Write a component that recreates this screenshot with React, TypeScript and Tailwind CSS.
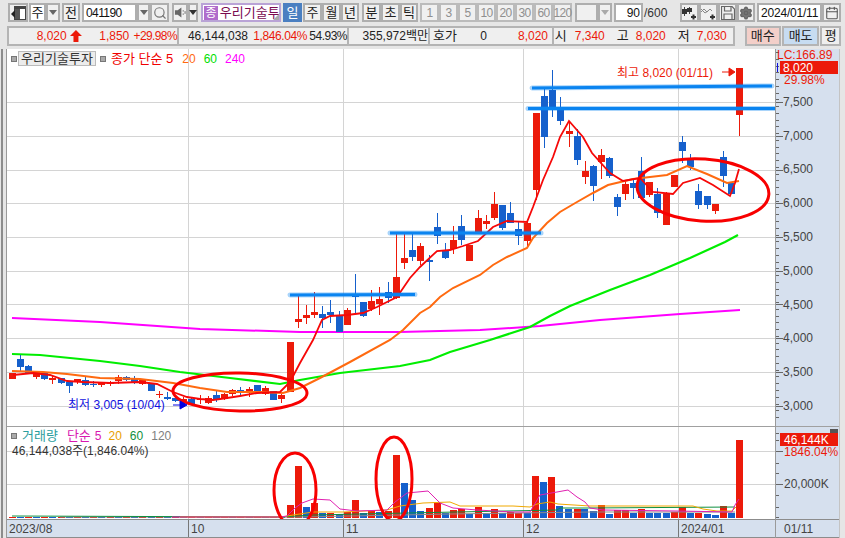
import React from 'react';
import { Search, Settings, Calendar } from 'lucide-react';

const FONT = "font-['Liberation_Sans','Noto_Sans_CJK_KR',sans-serif]";
const RED = '#ec1a0a';
const BLUE = '#1560cc';

// x, body top, body bottom, wick top, wick bottom, r = red / b = blue (page coordinates)
type Candle = [number, number, number, number, number, 'r' | 'b'];
const candles: Candle[] = [
  [12, 373, 379, 373, 379, 'r'], [20, 359, 367, 355, 371, 'b'], [28, 366, 373, 365, 374, 'b'], [36, 372, 377, 372, 379, 'r'],
  [44, 373, 379, 372, 380, 'b'], [52, 378, 380, 376, 384, 'r'], [61, 378, 383, 378, 384, 'b'], [69, 382, 386, 381, 393, 'b'],
  [77, 379, 381, 379, 384, 'r'], [85, 380, 385, 377, 386, 'b'], [93, 384, 385, 381, 387, 'b'], [101, 383, 385, 382, 387, 'r'],
  [110, 383, 384, 381, 386, 'r'], [118, 377, 381, 375, 384, 'r'], [126, 377, 380, 376, 381, 'b'], [134, 378, 383, 376, 384, 'b'],
  [142, 380, 384, 379, 385, 'r'], [151, 384, 391, 384, 391, 'b'], [159, 394, 395, 391, 398, 'r'], [167, 397, 399, 392, 400, 'b'],
  [175, 398, 401, 396, 402, 'b'], [183, 399, 401, 397, 407, 'r'], [191, 399, 404, 398, 405, 'b'], [200, 399, 400, 395, 404, 'r'],
  [208, 398, 403, 396, 404, 'r'], [216, 395, 400, 390, 402, 'b'], [224, 394, 399, 393, 400, 'r'], [232, 390, 394, 389, 396, 'r'],
  [240, 390, 393, 387, 395, 'b'], [249, 389, 393, 387, 397, 'r'], [257, 385, 393, 385, 393, 'b'], [265, 388, 394, 386, 395, 'r'],
  [273, 391, 400, 391, 400, 'b'], [281, 395, 399, 394, 403, 'r'], [290, 342, 392, 342, 392, 'r'],
  [298, 319, 322, 295, 328, 'r'], [306, 315, 318, 305, 324, 'r'], [314, 312, 315, 292, 318, 'r'], [322, 314, 318, 306, 328, 'b'],
  [330, 312, 315, 300, 323, 'b'], [339, 316, 332, 311, 332, 'b'], [347, 310, 325, 308, 325, 'r'], [355, 294, 297, 274, 313, 'b'],
  [363, 302, 316, 302, 317, 'b'], [371, 301, 309, 290, 311, 'r'], [379, 299, 304, 287, 315, 'r'], [388, 292, 298, 282, 303, 'b'],
  [396, 277, 298, 233, 299, 'r'], [404, 258, 263, 233, 269, 'r'], [412, 250, 257, 233, 261, 'b'], [420, 246, 261, 243, 265, 'r'],
  [429, 260, 262, 255, 281, 'b'], [437, 227, 236, 213, 244, 'b'], [445, 251, 258, 243, 259, 'b'], [453, 240, 249, 226, 254, 'r'],
  [461, 226, 240, 215, 245, 'b'], [469, 245, 261, 245, 261, 'r'], [478, 218, 232, 210, 233, 'r'], [486, 221, 224, 215, 229, 'r'],
  [494, 204, 218, 192, 220, 'r'], [502, 205, 228, 205, 230, 'b'], [510, 213, 223, 202, 223, 'b'], [518, 229, 236, 222, 245, 'b'],
  [527, 223, 241, 222, 248, 'r'], [536, 113, 190, 113, 200, 'r'], [544, 96, 137, 88, 148, 'b'], [552, 90, 107, 70, 117, 'b'],
  [560, 108, 121, 97, 125, 'b'], [569, 131, 134, 121, 147, 'r'], [577, 136, 160, 129, 165, 'b'], [585, 171, 177, 161, 184, 'r'],
  [593, 166, 186, 165, 201, 'b'], [601, 155, 162, 149, 179, 'r'], [609, 158, 176, 157, 178, 'b'], [617, 197, 207, 194, 216, 'b'],
  [625, 184, 194, 180, 200, 'r'], [633, 183, 188, 180, 199, 'b'], [641, 171, 198, 157, 198, 'b'], [649, 182, 195, 182, 197, 'r'],
  [657, 194, 213, 188, 218, 'b'], [666, 194, 225, 192, 225, 'r'], [674, 175, 187, 175, 187, 'r'], [682, 142, 151, 136, 163, 'b'],
  [690, 160, 167, 154, 170, 'b'], [698, 191, 205, 184, 209, 'b'], [707, 196, 205, 196, 209, 'b'], [715, 204, 211, 204, 214, 'r'],
  [723, 157, 176, 151, 187, 'b'], [731, 183, 194, 182, 194, 'b'], [739, 68, 115, 68, 136, 'r'],
];

const ma5 = '13,375 33,373 50,375 67,381 83,382 110,383 140,382 157,384 173,392 187,397 200,399 213,400 227,398 240,396 257,393 280,392 290,382 300,363 313,340 322,320 330,316 347,315 363,313 377,307 397,297 410,278 420,267 437,251 450,250 463,246 478,241 493,227 507,221 527,222 533,207 543,180 553,157 560,137 569,121 583,137 592,153 610,173 623,181 640,178 653,192 673,194 683,183 700,178 713,185 730,196 735,183 739,169';
const ma20 = '12,371 43,372 67,374 100,378 140,379 173,383 200,388 227,392 260,392 283,393 300,388 320,378 350,362 390,340 403,330 420,313 430,307 440,297 453,288 480,275 493,265 507,257 527,248 533,238 547,223 560,212 577,202 593,193 608,185 633,179 667,175 687,166 707,174 727,183 739,181';
const ma60 = '12,354 40,355 100,361 140,366 180,372 230,378 280,384 300,380 340,373 400,366 430,360 450,352 490,340 530,327 550,316 570,306 610,290 650,275 690,258 725,242 738,235';
const ma240 = '12,318 100,322 200,329 300,332 340,332 400,332 480,330 540,326 600,320 680,314 740,310';

const volumes: [number, number, 'r' | 'b'][] = [
  [290, 505, 'r'], [298, 466, 'r'], [306, 507, 'b'], [314, 503, 'r'], [322, 513, 'b'], [330, 513, 'r'], [339, 514, 'b'], [347, 512, 'r'],
  [355, 500, 'r'], [363, 513, 'b'], [371, 511, 'r'], [379, 512, 'b'], [388, 511, 'r'], [396, 455, 'r'], [404, 483, 'b'], [412, 500, 'b'],
  [420, 511, 'b'], [429, 508, 'r'], [437, 503, 'r'], [445, 513, 'b'], [453, 510, 'r'], [461, 509, 'r'], [469, 514, 'b'], [478, 507, 'r'],
  [486, 514, 'b'], [494, 509, 'r'], [502, 513, 'b'], [510, 512, 'r'], [518, 513, 'r'], [527, 513, 'b'], [535, 476, 'r'], [543, 482, 'b'],
  [551, 477, 'r'], [559, 506, 'b'], [568, 509, 'b'], [577, 509, 'r'], [584, 509, 'b'], [593, 511, 'b'], [601, 505, 'r'], [609, 514, 'b'],
  [617, 510, 'r'], [625, 510, 'r'], [633, 513, 'b'], [641, 509, 'r'], [649, 513, 'b'], [657, 513, 'b'], [666, 513, 'b'], [674, 512, 'r'],
  [682, 507, 'r'], [690, 513, 'b'], [698, 513, 'r'], [707, 514, 'b'], [715, 515, 'b'], [723, 506, 'r'], [731, 513, 'b'], [739, 440, 'r'],
];
const smallBars = [12, 20, 28, 36, 44, 52, 61, 69, 77, 85, 93, 101, 110, 118, 126, 134, 142, 151, 159, 167, 175, 183, 191, 200, 208, 216, 224, 232, 240, 249, 257, 265, 273, 281];

const volMa5 = '172,517 280,517 287,516 295,508 302,503 313,499 330,500 340,509 357,511 387,510 395,502 407,493 428,491 440,503 453,508 477,510 513,512 530,512 540,495 557,492 568,490 577,497 585,502 590,508 603,510 677,511 732,512 735,505 739,499';
const volMa20 = '180,517 282,517 293,515 313,512 343,512 387,510 400,506 423,503 450,502 460,506 513,506 530,507 537,504 550,502 558,504 590,506 677,506 693,506 703,509 717,511 732,511 736,507';
const volMa60 = '12,516 280,517 313,515 407,513 557,510 560,508 587,508 735,507';
const volMa120 = '60,517 300,517 450,514 590,512 735,512';

const priceLabels = ['7,500', '7,000', '6,500', '6,000', '5,500', '5,000', '4,500', '4,000', '3,500', '3,000'];
const priceGrid = [102, 136, 170, 203, 237, 271, 304, 338, 372, 406];
const gridX = [188, 343, 523, 678];

const btn = 'h-[19px] flex items-center justify-center border-2 border-[#aeaeae] bg-[#f0f0f0] text-[13px]';
const field = 'h-[19px] flex items-center border-2 border-[#aeaeae] bg-white text-[#111]';

function Arrow({ color = '#666' }: { color?: string }) {
  return <span className="w-0 h-0 border-x-[4px] border-x-transparent border-t-[5px]" style={{ borderTopColor: color }} />;
}

function Toolbar() {
  return (
    <div className="flex items-start h-[26px] pt-[3px] pl-[8px] text-[#222]">
      <div className={`${btn} w-[20px] mr-[1px]`}>
        <svg width="15" height="14" viewBox="0 0 15 14">
          <rect x="3.5" y="0.5" width="11" height="13" fill="#fff" stroke="#444" />
          <rect x="4" y="1" width="10" height="2" fill="#444" />
          <rect x="4" y="3" width="5" height="10" fill="#555" />
          <path d="M0 8 L4 4 V12 Z" fill="#222" />
        </svg>
      </div>
      <div className={`${field} w-[17px] justify-center text-[13px]`}>주</div>
      <div className={`${btn} w-[14px] mr-[2px] bg-[#dcdcdc]`}><Arrow /></div>
      <div className={`${btn} w-[18px] mr-[2px]`}>전</div>
      <div className={`${field} w-[55px] pl-[2px] text-[12px] tracking-[-0.6px]`}>041190</div>
      <div className={`${btn} w-[13px]`}><Arrow /></div>
      <div className={`${btn} w-[19px] mr-[3px]`}><Search size={14} strokeWidth={2} color="#777" /></div>
      <div className={`${btn} w-[16px]`}>
        <svg width="13" height="13" viewBox="0 0 13 13">
          <path d="M1 4H4L8 1V12L4 9H1Z" fill="#666" />
          <path d="M10 4V5.5M10 7.5V9M12 5V8" stroke="#666" />
        </svg>
      </div>
      <div className={`${btn} w-[10px] mr-[3px]`}><Arrow color="#333" /></div>
      <div className="h-[19px] w-[80px] mr-[2px] flex items-center pl-[1px] gap-[2px] border-2 border-[#b9a3d6] bg-white relative">
        <span className="w-[14px] h-[14px] flex items-center justify-center bg-[#b06ccc] text-white text-[12px]">종</span>
        <span className="text-[13px] text-[#7a0a50] whitespace-nowrap overflow-hidden w-[60px]">우리기술투</span>
        <span className="absolute right-0 bottom-0 w-0 h-0 border-l-[6px] border-l-transparent border-b-[6px] border-b-[#aaa]" />
      </div>
      <div className="h-[19px] w-[19px] mr-[1px] flex items-center justify-center bg-[#4a7fc1] text-white text-[13px]">일</div>
      <div className={`${btn} w-[19px]`}>주</div>
      <div className={`${btn} w-[19px]`}>월</div>
      <div className={`${btn} w-[18px] mr-[3px]`}>년</div>
      <div className={`${btn} w-[19px]`}>분</div>
      <div className={`${btn} w-[19px]`}>초</div>
      <div className={`${btn} w-[18px] mr-[2px]`}>틱</div>
      {['1', '3', '5', '10', '20', '30', '60', '120'].map((t) => (
        <div key={t} className="h-[19px] w-[19px] flex items-center justify-center border-2 border-[#bbbbbb] bg-[#f0f0f0] text-[12px] tracking-[-0.7px] text-[#8f8f8f]">{t}</div>
      ))}
      <div className={`${btn} w-[23px] ml-[3px] bg-[#ececec]`} />
      <div className={`${btn} w-[14px] mr-[2px] bg-[#ececec]`}><Arrow color="#aaa" /></div>
      <div className={`${field} w-[29px] justify-end pr-[1px] text-[12px]`}>90</div>
      <div className="h-[19px] w-[37px] flex items-center pl-[1px] text-[12px] text-[#333]">/600</div>
      <div className={`${btn} w-[19px]`}>
        <svg width="15" height="14" viewBox="0 0 15 14">
          <path d="M2.5 1V10M7.5 1V8" stroke="#444" />
          <rect x="0" y="3" width="5" height="5" fill="#333" />
          <rect x="5" y="2" width="5" height="4" fill="#333" />
          <path d="M9 11H14M11.5 8.5V13.5" stroke="#333" strokeWidth="2" />
        </svg>
      </div>
      <div className={`${btn} w-[19px]`}>
        <svg width="15" height="14" viewBox="0 0 15 14">
          <path d="M0 6L3 3L6 6L9 3L11 5M0 3L4 7L7 5" stroke="#888" fill="none" />
          <path d="M9 11H14M11.5 8.5V13.5" stroke="#333" strokeWidth="2" />
        </svg>
      </div>
      <div className={`${btn} w-[19px]`}>
        <svg width="14" height="14" viewBox="0 0 14 14" fill="none" stroke="#666">
          <path d="M0.5 0.5H11L13.5 3V13.5H0.5Z" strokeWidth="1.2" />
          <path d="M3.5 0.5V5H10V0.5M3 13.5V8H11V13.5" strokeWidth="1.2" />
        </svg>
      </div>
      <div className={`${btn} w-[18px] mr-[2px]`}><Settings size={14} color="#666" fill="#777" strokeWidth={2.4} /></div>
      <div className={`${field} w-[65px] pl-[2px] text-[12px] tracking-[-0.2px]`}>2024/01/11</div>
      <div className={`${btn} w-[19px]`}><Calendar size={14} color="#555" strokeWidth={1.8} /></div>
    </div>
  );
}

function QuoteRow() {
  const red = 'text-[#ec1a0a]';
  return (
    <div className="flex h-[20px] ml-[7px] mr-[4px] text-[12px] text-[#222] whitespace-nowrap">
      <div className="w-[172px] flex items-center border-2 border-[#b4b4b4] bg-[#efefef]">
        <span className={`w-[58px] text-right ${red}`}>8,020</span>
        <svg width="14" height="14" viewBox="0 0 14 14" className="ml-[2px]"><path d="M7 1L13 7H9.5V13H4.5V7H1Z" fill={RED} /></svg>
        <span className={`w-[47px] text-right ${red}`}>1,850</span>
        <span className={`w-[48px] text-right tracking-[-0.6px] ${red}`}>+29.98%</span>
      </div>
      <div className="w-[171px] flex items-center border-y-2 border-r-2 border-[#b4b4b4] bg-[#efefef]">
        <span className="w-[69px] text-right">46,144,038</span>
        <span className={`w-[59px] text-right tracking-[-0.4px] ${red}`}>1,846.04%</span>
        <span className="w-[40px] text-right tracking-[-0.5px]">54.93%</span>
      </div>
      <div className="w-[82px] flex items-center border-y-2 border-r-2 border-[#b4b4b4] bg-[#efefef]">
        <span className="w-[79px] text-right">355,972백만</span>
      </div>
      <div className="w-[126px] flex items-center border-y-2 border-r-2 border-[#b4b4b4] bg-[#efefef]">
        <span className="w-[30px] pl-[3px] text-[13px]">호가</span>
        <span className="w-[27px] text-right">0</span>
        <span className={`w-[61px] text-right ${red}`}>8,020</span>
      </div>
      <div className="w-[184px] flex items-center border-y-2 border-r-2 border-[#b4b4b4] bg-[#efefef]">
        <span className="w-[13px] text-right text-[13px]">시</span>
        <span className={`w-[38px] text-right ${red}`}>7,340</span>
        <span className="w-[24px] text-right text-[13px]">고</span>
        <span className={`w-[37px] text-right ${red}`}>8,020</span>
        <span className="w-[24px] text-right text-[13px]">저</span>
        <span className={`w-[37px] text-right ${red}`}>7,030</span>
      </div>
      <div className="w-[37px] ml-[10px] flex items-center justify-center border-2 border-[#b4b4b4] bg-[#f3cfc9] text-[13px]">매수</div>
      <div className="w-[38px] ml-[1px] flex items-center justify-center border-2 border-[#b4b4b4] bg-[#c7dcf1] text-[13px]">매도</div>
      <div className="w-[21px] ml-[1px] flex items-center justify-center border-2 border-[#b4b4b4] bg-[#efefef] text-[13px]">평</div>
    </div>
  );
}

function PriceChart() {
  return (
    <svg viewBox="7 49 768 377" width="768" height="377" className="block">
      {priceGrid.map((y) => <line key={y} x1="7" x2="775" y1={y + 0.5} y2={y + 0.5} stroke="#d4d4d4" />)}
      {gridX.map((x) => <line key={x} x1={x + 0.5} x2={x + 0.5} y1="49" y2="426" stroke="#d4d4d4" />)}
      <polyline points={ma240} fill="none" stroke="#ff00ff" strokeWidth="2" />
      <polyline points={ma60} fill="none" stroke="#00ee00" strokeWidth="2.2" />
      {candles.map(([x, t, b, wt, wb, c]) => (
        <g key={x} shapeRendering="crispEdges" fill={c === 'r' ? RED : BLUE}>
          <rect x={x} y={wt} width="1" height={wb - wt} />
          <rect x={x - 3} y={t} width="7" height={Math.max(b - t, 1)} />
        </g>
      ))}
      <polyline points={ma20} fill="none" stroke="#ff6a10" strokeWidth="2" />
      <polyline points={ma5} fill="none" stroke="#f60808" strokeWidth="1.8" />
      <g stroke="#0a84f0" fill="none">
        <line x1="290" y1="295" x2="415" y2="294.5" strokeWidth="5" strokeOpacity="0.35" strokeLinecap="round" />
        <line x1="290" y1="295" x2="415" y2="294.5" strokeWidth="3" />
        <line x1="390" y1="233" x2="541" y2="233" strokeWidth="5" strokeOpacity="0.35" strokeLinecap="round" />
        <line x1="390" y1="233" x2="541" y2="233" strokeWidth="3" />
        <line x1="532" y1="88" x2="772" y2="86" strokeWidth="5" strokeOpacity="0.35" strokeLinecap="round" />
        <line x1="532" y1="88" x2="772" y2="86" strokeWidth="3" />
        <line x1="528" y1="108.5" x2="775" y2="108.5" strokeWidth="5" strokeOpacity="0.35" strokeLinecap="round" />
        <line x1="528" y1="108.5" x2="775" y2="108.5" strokeWidth="3" />
      </g>
      <g fill="none" stroke="#f80000" strokeWidth="3">
        <ellipse cx="240" cy="392" rx="67" ry="19" transform="rotate(1 240 392)" />
        <ellipse cx="703" cy="190" rx="66" ry="31" transform="rotate(4 703 190)" />
      </g>
      <path d="M722 72H730M729 68L735 72L729 76Z" stroke={RED} fill={RED} />
      <path d="M173 405H181M180 401L187 405L180 409Z" stroke="#0000e0" fill="#0000e0" />
    </svg>
  );
}

function VolumeChart() {
  return (
    <svg viewBox="7 427 768 92" width="768" height="92" className="block">
      {[451, 484].map((y) => <line key={y} x1="7" x2="775" y1={y + 0.5} y2={y + 0.5} stroke="#d4d4d4" />)}
      {gridX.map((x) => <line key={x} x1={x + 0.5} x2={x + 0.5} y1="427" y2="519" stroke="#d4d4d4" />)}
      <g shapeRendering="crispEdges">
        {smallBars.map((x, i) => <rect key={x} x={x - 3} y="516.5" width="7" height="1.5" fill={i % 2 ? BLUE : RED} />)}
        {volumes.map(([x, top, c]) => <rect key={x} x={x - 3} y={top} width="7" height={518 - top} fill={c === 'r' ? RED : BLUE} />)}
      </g>
      <polyline points={volMa120} fill="none" stroke="#8a8a8a" strokeWidth="1" />
      <polyline points={volMa60} fill="none" stroke="#0f9040" strokeWidth="1" />
      <polyline points={volMa20} fill="none" stroke="#f0a800" strokeWidth="1" />
      <polyline points={volMa5} fill="none" stroke="#e020b0" strokeWidth="1" />
      <g fill="none" stroke="#f80000" strokeWidth="3">
        <ellipse cx="295" cy="490" rx="21" ry="37" />
        <ellipse cx="394" cy="479" rx="18" ry="42" />
      </g>
    </svg>
  );
}

function Ticks({ ys, major }: { ys: number[]; major: number[] }) {
  return (
    <svg className="absolute left-0 top-0" width="8" height="100%">
      {ys.map((y) => <line key={y} x1="0" x2={major.includes(y) ? 7 : 3} y1={y + 0.5} y2={y + 0.5} stroke="#666" />)}
    </svg>
  );
}

export default function App() {
  const majorTicks = priceGrid.map((y) => y - 49);
  const priceTicks = Array.from({ length: 55 }, (_, i) => Math.round(3 + i * 6.76));
  return (
    <div className={`w-[845px] h-[538px] overflow-hidden flex flex-col bg-[#e6e6e6] ${FONT}`}>
      <Toolbar />
      <QuoteRow />
      <div className="flex h-[489px] mt-[3px] ml-[1px] pl-[3px] border-l-2 border-[#8c8c8c]">
        <div className="w-[770px] flex flex-col bg-white border-x border-[#9a9a9a]">
          <div className="relative h-[378px] border-b border-[#a0a0a0]">
            <PriceChart />
            <div className="absolute left-[4px] top-[2px] flex items-center h-[15px] text-[13px] whitespace-nowrap">
              <span className="w-[6px] h-[6px] bg-[#aaa] border border-[#777]" />
              <span className="ml-[1px] w-[78px] h-[15px] flex items-center justify-center border border-[#bbb] bg-[#ececec] text-[#333]">우리기술투자</span>
              <span className="ml-[4px] w-[6px] h-[6px] bg-[#aaa] border border-[#777]" />
              <span className="ml-[5px] text-[#f00000]">종가 단순 5</span>
              <span className="ml-[9px] text-[12px] text-[#ff6a10]">20</span>
              <span className="ml-[8px] text-[12px] text-[#00e000]">60</span>
              <span className="ml-[8px] text-[12px] text-[#ff00ff]">240</span>
            </div>
            <span className="absolute left-[610px] top-[15px] text-[12px] text-[#ec1a0a] whitespace-nowrap">최고 8,020 (01/11)</span>
            <span className="absolute left-[61px] top-[347px] text-[12px] text-[#1010e0] whitespace-nowrap">최저 3,005 (10/04)</span>
          </div>
          <div className="relative h-[92px]">
            <VolumeChart />
            <div className="absolute left-[4px] top-[1px] flex items-center h-[15px] text-[12px] whitespace-nowrap">
              <span className="w-[6px] h-[6px] bg-[#aaa] border border-[#777]" />
              <span className="ml-[5px] text-[13px] text-[#2a9d9d]">거래량</span>
              <span className="ml-[9px] text-[13px] text-[#d818b0]">단순</span>
              <span className="ml-[4px] text-[#d818b0]">5</span>
              <span className="ml-[7px] text-[#e8a000]">20</span>
              <span className="ml-[8px] text-[#109040]">60</span>
              <span className="ml-[8px] text-[#808080]">120</span>
            </div>
            <span className="absolute left-[5px] top-[15px] text-[12px] text-[#333] whitespace-nowrap">46,144,038주(1,846.04%)</span>
          </div>
          <div className="h-[19px] flex items-center bg-[#d6e0ee] border-y border-[#8c8c8c] text-[12px] text-[#444]">
            <span className="w-[181px] pl-[2px]">2023/08</span>
            <span className="w-[155px] pl-[2px] h-full flex items-center border-l border-[#777]">10</span>
            <span className="w-[180px] pl-[2px] h-full flex items-center border-l border-[#777]">11</span>
            <span className="w-[155px] pl-[2px] h-full flex items-center border-l border-[#777]">12</span>
            <span className="pl-[2px] h-full flex items-center border-l border-[#777]">2024/01</span>
          </div>
        </div>
        <div className="w-[64px] flex flex-col bg-[#d6e0ee] text-[12px] text-[#444] border-r border-[#c4c4c4]">
          <div className="relative h-[378px] border-b border-[#a0a0a0]">
            <Ticks ys={[...priceTicks, ...majorTicks]} major={majorTicks} />
            <span className="absolute left-[1px] top-[1px] h-[11px] leading-[11px] text-[#ec1a0a] whitespace-nowrap">LC:166.89</span>
            <span className="absolute left-[1px] top-[14px] w-[1px] h-[9px] bg-[#1010e0]" />
            <span className="absolute left-[4px] top-[12px] w-[58px] h-[13px] pl-[3px] flex items-center bg-[#ec1a0a] text-white">8,020</span>
            <span className="absolute left-[8px] top-[25px] h-[12px] leading-[12px] text-[#ec1a0a]">29.98%</span>
            <div className="absolute left-[7px] top-[36px] flex flex-col">
              {priceLabels.map((p) => (
                <span key={p} className="h-[33.8px] flex items-center">{p}</span>
              ))}
            </div>
          </div>
          <div className="relative h-[92px]">
            <Ticks ys={[6, 13, 24, 36, 46, 57, 68, 80, 90]} major={[24, 57]} />
            <span className="absolute right-[1px] top-[2px] w-[8px] h-[6px] bg-[#555]" />
            <span className="absolute left-[4px] top-[6px] w-[58px] h-[13px] pl-[4px] flex items-center bg-[#ec1a0a] text-white whitespace-nowrap">46,144K</span>
            <span className="absolute left-[8px] top-[19px] h-[12px] leading-[12px] text-[#ec1a0a] whitespace-nowrap">1846.04%</span>
            <span className="absolute left-[8px] top-[50px] leading-[14px] whitespace-nowrap">20,000K</span>
          </div>
          <div className="h-[19px] flex items-center pl-[8px] border-y border-[#8c8c8c]">01/11</div>
        </div>
      </div>
    </div>
  );
}
